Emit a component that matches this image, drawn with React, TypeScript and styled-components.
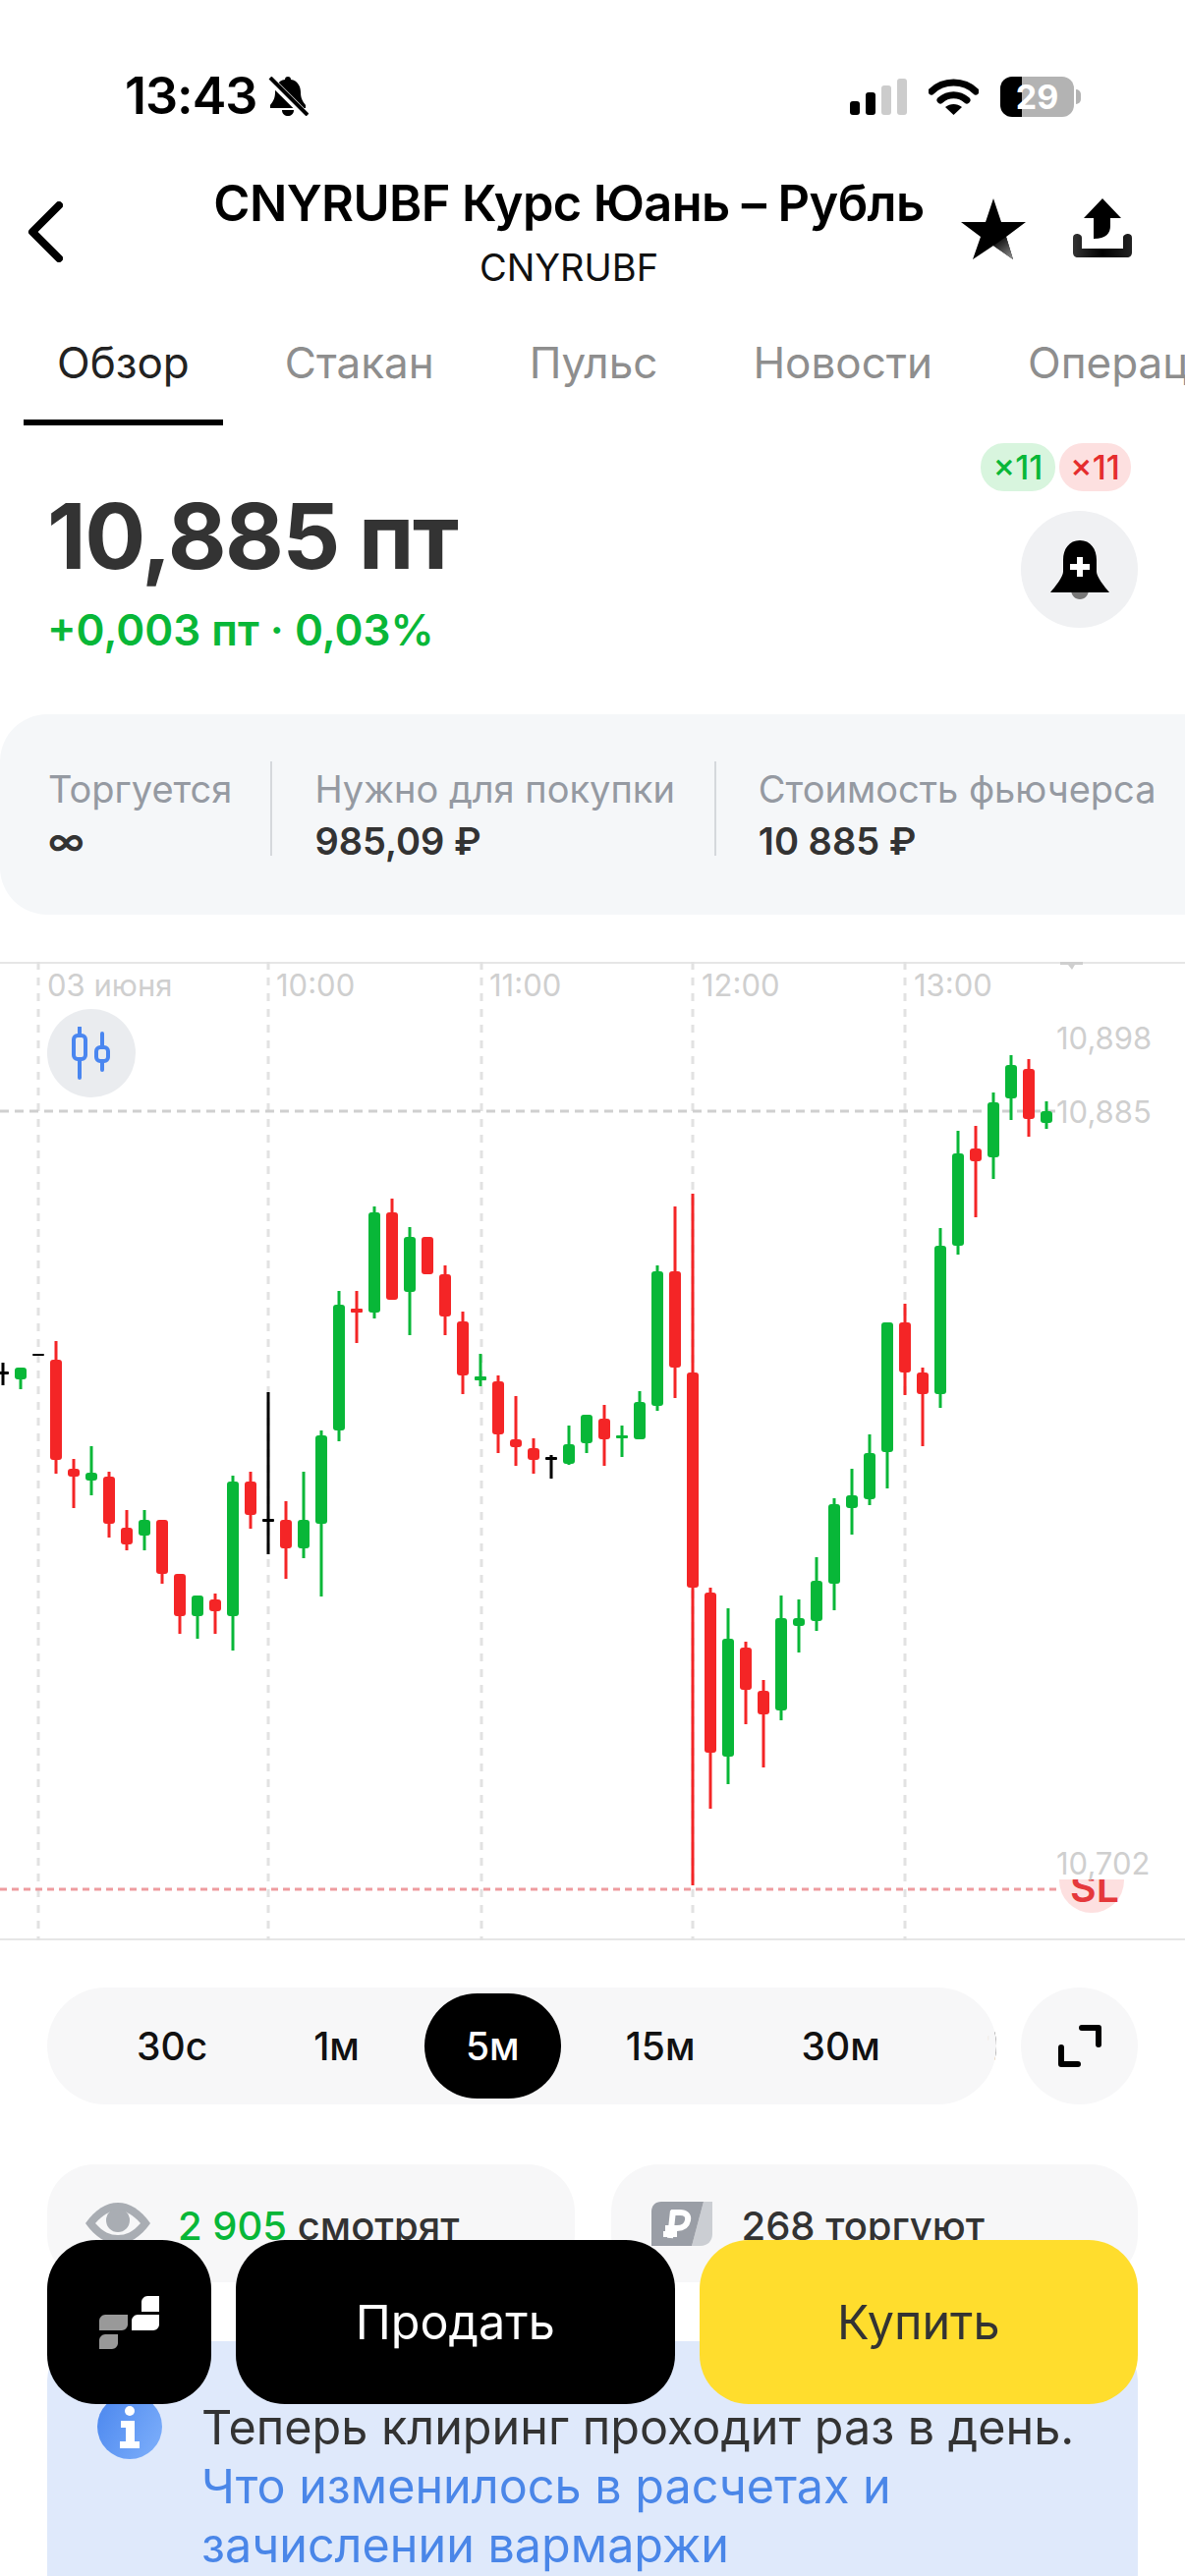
import React from "react";
import styled, { createGlobalStyle } from "styled-components";

const GREEN = "#08b738";
const RED = "#f42526";
const BLACK = "#000";

type Candle = [number, number, number, number, "g" | "r" | "k"];

// wick top, wick bottom, body top, body bottom - first candle sits at x=3, step 18
const candles: Candle[] = [
  [1387, 1410, 1396, 1399, "k"],
  [1392, 1414, 1392, 1404, "g"],
  [1378, 1380, 1378, 1380, "k"],
  [1365, 1500, 1384, 1486, "r"],
  [1485, 1535, 1495, 1503, "r"],
  [1472, 1522, 1499, 1507, "g"],
  [1498, 1565, 1503, 1551, "r"],
  [1537, 1578, 1555, 1572, "r"],
  [1537, 1578, 1547, 1563, "g"],
  [1547, 1612, 1547, 1602, "r"],
  [1602, 1663, 1602, 1645, "r"],
  [1624, 1668, 1624, 1645, "g"],
  [1622, 1663, 1628, 1640, "r"],
  [1502, 1680, 1508, 1645, "g"],
  [1498, 1556, 1508, 1542, "r"],
  [1417, 1582, 1546, 1549, "k"],
  [1528, 1607, 1547, 1576, "r"],
  [1498, 1586, 1547, 1576, "g"],
  [1456, 1625, 1461, 1551, "g"],
  [1314, 1467, 1328, 1456, "g"],
  [1314, 1367, 1332, 1336, "r"],
  [1228, 1342, 1234, 1336, "g"],
  [1220, 1323, 1234, 1323, "r"],
  [1249, 1359, 1259, 1315, "g"],
  [1259, 1297, 1259, 1297, "r"],
  [1288, 1359, 1297, 1340, "r"],
  [1335, 1419, 1345, 1400, "r"],
  [1378, 1411, 1401, 1405, "g"],
  [1400, 1479, 1406, 1460, "r"],
  [1421, 1492, 1465, 1473, "r"],
  [1464, 1500, 1474, 1486, "r"],
  [1481, 1505, 1483, 1486, "k"],
  [1451, 1491, 1470, 1490, "g"],
  [1440, 1479, 1440, 1469, "g"],
  [1430, 1492, 1444, 1465, "r"],
  [1451, 1483, 1461, 1464, "g"],
  [1416, 1465, 1427, 1465, "g"],
  [1288, 1436, 1294, 1431, "g"],
  [1228, 1423, 1294, 1392, "r"],
  [1215, 1919, 1397, 1616, "r"],
  [1616, 1841, 1621, 1784, "r"],
  [1637, 1816, 1668, 1788, "g"],
  [1671, 1755, 1677, 1720, "r"],
  [1710, 1799, 1721, 1745, "r"],
  [1624, 1751, 1647, 1741, "g"],
  [1628, 1682, 1647, 1655, "g"],
  [1585, 1660, 1609, 1650, "g"],
  [1525, 1639, 1531, 1612, "g"],
  [1495, 1562, 1522, 1535, "g"],
  [1460, 1532, 1479, 1526, "g"],
  [1346, 1515, 1346, 1478, "g"],
  [1327, 1420, 1346, 1397, "r"],
  [1392, 1472, 1397, 1419, "r"],
  [1250, 1433, 1268, 1419, "g"],
  [1151, 1277, 1174, 1268, "g"],
  [1146, 1239, 1169, 1182, "r"],
  [1112, 1200, 1122, 1178, "g"],
  [1074, 1140, 1084, 1118, "g"],
  [1078, 1157, 1088, 1139, "r"],
  [1121, 1149, 1131, 1143, "g"],
];

const toneColor = { g: GREEN, r: RED, k: BLACK };

const timeLabels = [
  { x: 48, text: "03 июня" },
  { x: 281, text: "10:00" },
  { x: 498, text: "11:00" },
  { x: 714, text: "12:00" },
  { x: 930, text: "13:00" },
];

const tabs = ["Обзор", "Стакан", "Пульс", "Новости", "Операции"];
const frames = ["30с", "1м", "5м", "15м", "30м", "1ч"];

const GlobalStyle = createGlobalStyle`
  html, body {
    margin: 0;
    padding: 0;
    background: #fff;
  }
  body {
    font-family: Inter, "Noto Sans", sans-serif;
    color: #333;
  }
  * {
    box-sizing: border-box;
  }
`;

const Page = styled.div`
  position: relative;
  width: 1206px;
  height: 2622px;
  overflow: hidden;
  background: #fff;
`;

const StatusBar = styled.div`
  height: 150px;
  padding: 78px 113px 0 127px;
  display: flex;
  justify-content: space-between;
  align-items: flex-start;
`;

const StatusGroup = styled.div<{ $gap: number }>`
  display: flex;
  align-items: center;
  height: 40px;
  gap: ${(p) => p.$gap}px;
`;

const Time = styled.span`
  font-size: 52px;
  font-weight: 600;
  line-height: 40px;
  letter-spacing: -1px;
  color: #000;
`;

const Battery = styled.div`
  position: relative;
  width: 75px;
  height: 41px;
  border-radius: 12px;
  background: linear-gradient(90deg, #000 0 22px, #b3b3b3 22px);
  color: #fff;
  font-size: 34px;
  font-weight: 700;
  line-height: 41px;
  text-align: center;
  &::after {
    content: "";
    position: absolute;
    right: -7px;
    top: 13px;
    width: 5px;
    height: 15px;
    border-radius: 0 8px 8px 0;
    background: #b3b3b3;
  }
`;

const Header = styled.header`
  height: 160px;
  display: grid;
  grid-template-columns: 217px 724px 1fr;
`;

const BackCell = styled.div`
  padding: 55px 0 0 28px;
`;

const TitleCell = styled.div`
  padding-top: 27px;
  display: flex;
  flex-direction: column;
  align-items: center;
`;

const Title = styled.h1`
  margin: 0;
  font-size: 50.500px;
  line-height: 60px;
  font-weight: 600;
  letter-spacing: -0.6px;
  white-space: nowrap;
  color: #000;
`;

const Ticker = styled.div`
  margin-top: 15px;
  font-size: 38px;
  line-height: 40px;
  color: #111;
`;

const ActionCell = styled.div`
  padding: 52px 0 0 37px;
  display: flex;
  gap: 48px;
  align-items: flex-start;
`;

const TabBar = styled.nav`
  height: 123px;
  padding-left: 24px;
  display: flex;
  gap: 29px;
  overflow: hidden;
`;

const Tab = styled.div<{ $active?: boolean }>`
  flex-shrink: 0;
  display: flex;
  align-items: center;
  padding: 0 34px;
  font-size: 44px;
  color: ${(p) => (p.$active ? "#222" : "#8e8e8e")};
  border-bottom: 6px solid ${(p) => (p.$active ? "#000" : "transparent")};
`;

const Quote = styled.section`
  height: 294px;
  padding: 0 48px 0 48px;
  display: flex;
  justify-content: space-between;
`;

const PriceColumn = styled.div`
  padding-top: 63px;
`;

const Price = styled.div`
  font-size: 92px;
  line-height: 100px;
  font-weight: 700;
  letter-spacing: -1.5px;
  color: #333;
`;

const Change = styled.div`
  margin-top: 20px;
  font-size: 44px;
  line-height: 50px;
  font-weight: 600;
  color: ${GREEN};
`;

const QuoteSide = styled.div`
  padding-top: 18px;
  display: flex;
  flex-direction: column;
  align-items: flex-end;
`;

const Leverage = styled.div`
  display: flex;
  gap: 4px;
  margin-right: 7px;
`;

const LeverageBadge = styled.span<{ $sell?: boolean }>`
  width: ${(p) => (p.$sell ? 73 : 76)}px;
  height: 49px;
  border-radius: 24px;
  display: flex;
  align-items: center;
  justify-content: center;
  font-size: 34px;
  font-weight: 500;
  color: ${(p) => (p.$sell ? "#e52d2d" : GREEN)};
  background: ${(p) => (p.$sell ? "#fde0e0" : "#d8f5de")};
`;

const RoundButton = styled.button<{ $top?: number }>`
  width: 119px;
  height: 119px;
  margin-top: ${(p) => p.$top ?? 0}px;
  padding: 0;
  border: 0;
  border-radius: 50%;
  flex-shrink: 0;
  display: flex;
  align-items: center;
  justify-content: center;
  background: ${(p) => (p.$top ? "#f0f1f3" : "#f7f7f8")};
`;

const StatsCard = styled.section`
  height: 204px;
  padding: 48px 0 0 49px;
  display: flex;
  background: #f5f7f9;
  border-radius: 48px 0 0 48px;
`;

const Stat = styled.div<{ $first?: boolean; $pad: number }>`
  height: 96px;
  flex-shrink: 0;
  white-space: nowrap;
  padding-left: ${(p) => (p.$first ? 0 : 43)}px;
  padding-right: ${(p) => p.$pad}px;
  border-left: ${(p) => (p.$first ? "none" : "2px solid #d5d8dc")};
`;

const StatLabel = styled.div`
  font-size: 38px;
  line-height: 44px;
  margin-top: 6px;
  color: #959aa2;
`;

const StatValue = styled.div`
  font-size: 38px;
  line-height: 44px;
  margin-top: 9px;
  font-weight: 600;
  color: #333;
`;

const Chart = styled.section`
  position: relative;
  height: 996px;
  margin-top: 48px;
  border-top: 2px solid #e6e6e6;
  border-bottom: 2px solid #e6e6e6;
`;

const ChartCanvas = styled.svg`
  display: block;
  position: absolute;
  left: 0;
  top: -2px;
  width: 1206px;
  height: 996px;
`;

const ChartText = styled.text`
  font-family: Inter, sans-serif;
  font-size: 31px;
  fill: #cfcfcf;
`;

const SlText = styled.text`
  font-family: Inter, sans-serif;
  font-size: 41px;
  font-weight: 600;
  fill: #e5383b;
`;

const CandleToggle = styled.button`
  position: absolute;
  left: 48px;
  top: 46px;
  width: 90px;
  height: 90px;
  padding: 0;
  border: 0;
  border-radius: 50%;
  display: flex;
  align-items: center;
  justify-content: center;
  background: #eaecef;
`;

const FrameRow = styled.div`
  margin-top: 48px;
  padding: 0 48px;
  display: flex;
  gap: 25px;
`;

const FramePill = styled.div`
  position: relative;
  width: 966px;
  height: 119px;
  padding: 0 0 0 49px;
  display: flex;
  align-items: center;
  gap: 24px;
  overflow: hidden;
  border-radius: 60px;
  background: #f7f7f8;
  &::after {
    content: "";
    position: absolute;
    right: 0;
    top: 0;
    bottom: 0;
    width: 12px;
    background: linear-gradient(90deg, rgba(247, 247, 248, 0.7), #f7f7f8 40%);
  }
`;

const Frame = styled.div<{ $active?: boolean }>`
  height: 107px;
  padding: 0 42px;
  flex-shrink: 0;
  display: flex;
  align-items: center;
  font-size: 39px;
  font-weight: 500;
  border-radius: 54px;
  color: ${(p) => (p.$active ? "#fff" : "#111")};
  background: ${(p) => (p.$active ? "#000" : "transparent")};
`;

const CrowdRow = styled.div`
  margin-top: 61px;
  padding: 0 48px;
  display: grid;
  grid-template-columns: 1fr 1fr;
  gap: 37px;
`;

const CrowdCard = styled.div<{ $gap: number; $pad: number }>`
  height: 120px;
  padding-left: ${(p) => p.$pad}px;
  display: flex;
  align-items: center;
  gap: ${(p) => p.$gap}px;
  border-radius: 48px;
  background: #f7f7f8;
`;

const CrowdText = styled.span`
  font-size: 40px;
  font-weight: 500;
  margin-top: 4px;
  color: #333;
`;

const CrowdCount = styled.span`
  color: ${GREEN};
`;

const Banner = styled.section`
  height: 300px;
  margin: 60px 48px 0;
  padding: 58px 20px 0 51px;
  display: flex;
  gap: 40px;
  border-radius: 40px;
  background: #dfe9fb;
`;

const BannerIcon = styled.div`
  width: 66px;
  height: 66px;
  margin-top: -4px;
  flex-shrink: 0;
  border-radius: 50%;
  display: flex;
  align-items: center;
  justify-content: center;
  background: linear-gradient(120deg, #4a86ee, #7fb0fb);
`;

const BannerText = styled.div`
  font-size: 48.500px;
  line-height: 60px;
  white-space: nowrap;
  color: #333;
`;

const BannerLink = styled.span`
  color: #4a86e8;
`;

const ActionBar = styled.div`
  position: absolute;
  left: 48px;
  right: 48px;
  bottom: 175px;
  display: flex;
  gap: 25px;
`;

const ActionButton = styled.button<{ $tone: "dark" | "yellow"; $width?: number }>`
  flex: ${(p) => (p.$width ? `0 0 ${p.$width}px` : "1")};
  height: 167px;
  padding: 0;
  border: 0;
  border-radius: 50px;
  display: flex;
  align-items: center;
  justify-content: center;
  font-family: Inter, sans-serif;
  font-size: 48.500px;
  color: ${(p) => (p.$tone === "dark" ? "#fff" : "#333")};
  background: ${(p) => (p.$tone === "dark" ? "#000" : "#ffdd2d")};
`;

function BellSlash() {
  return (
    <svg width="42" height="40" viewBox="0 0 42 40">
      <path d="M21 0c2 0 3 1 3 3 7 1 10 7 10 13 0 6 2 9 5 13v3H3v-3c3-4 5-7 5-13 0-6 3-12 10-13 0-2 1-3 3-3z" fill="#000" />
      <path d="M15 34h12c0 4-3 6-6 6s-6-2-6-6z" fill="#000" />
      <path d="M1 1l38 38" stroke="#fff" strokeWidth="8" />
      <path d="M3 1l38 38" stroke="#000" strokeWidth="4" />
    </svg>
  );
}

function Signal() {
  return (
    <svg width="58" height="37" viewBox="0 0 58 37">
      <rect x="0" y="23" width="10" height="14" rx="3" fill="#000" />
      <rect x="16" y="14" width="10" height="23" rx="3" fill="#000" />
      <rect x="32" y="7" width="10" height="30" rx="3" fill="#ccc" />
      <rect x="48" y="0" width="10" height="37" rx="3" fill="#ccc" />
    </svg>
  );
}

function Wifi() {
  return (
    <svg width="51" height="37" viewBox="0 0 51 37">
      <path d="M3 13C15 1 36 1 48 13" fill="none" stroke="#000" strokeWidth="7" strokeLinecap="round" />
      <path d="M12 22c8-7 19-7 27 0" fill="none" stroke="#000" strokeWidth="7" strokeLinecap="round" />
      <path d="M25.500 37L17 29c5-4 12-4 17 0z" fill="#000" />
    </svg>
  );
}

function BackIcon() {
  return (
    <svg width="36" height="62" viewBox="0 0 36 62">
      <path d="M32 4L5 31l27 27" fill="none" stroke="#000" strokeWidth="8" strokeLinecap="round" strokeLinejoin="round" />
    </svg>
  );
}

function StarIcon() {
  return (
    <svg width="66" height="62" viewBox="0 0 66 62">
      <defs>
        <linearGradient id="starShade" x1="0.2" y1="0" x2="0.8" y2="1">
          <stop offset="0" stopColor="#000" />
          <stop offset="1" stopColor="#888" />
        </linearGradient>
      </defs>
      <path d="M33 0l8 24h25L46 39l7 23-20-14-21 14 8-23L0 24h25z" fill="#000" />
      <path d="M46 39l7 23-20-14z" fill="url(#starShade)" />
    </svg>
  );
}

function ShareIcon() {
  return (
    <svg width="60" height="60" viewBox="0 0 60 60">
      <defs>
        <linearGradient id="trayShade" x1="0" y1="0" x2="1" y2="0">
          <stop offset="0" stopColor="#333" />
          <stop offset="0.5" stopColor="#000" />
          <stop offset="1" stopColor="#222" />
        </linearGradient>
      </defs>
      <path d="M30 0l19 20H38v8c0 7-4 13-17 13V20H11z" fill="#000" />
      <path d="M0 40c0-3 2-4 4-4s5 1 5 4v11h42V40c0-3 3-4 5-4s4 1 4 4v15c0 3-2 5-5 5H5c-3 0-5-2-5-5z" fill="url(#trayShade)" />
    </svg>
  );
}

function BellPlus() {
  return (
    <svg width="60" height="60" viewBox="0 0 60 60">
      <path d="M21 50h18c0 6-4 10-9 10s-9-4-9-10z" fill="#777" />
      <path d="M30 0c11 0 17 9 17 20v12c0 5 8 15 13 21H0c5-6 13-16 13-21V20C13 9 19 0 30 0z" fill="#000" />
      <path d="M27 17h6v7h7v6h-7v7h-6v-7h-7v-6h7z" fill="#fff" />
    </svg>
  );
}

function CandleIcon() {
  return (
    <svg width="40" height="54" viewBox="0 0 40 54" fill="none" stroke="#4a86f0" strokeWidth="4" strokeLinecap="round">
      <path d="M8 1v8M8 35v17M31 7v13M31 37v7" />
      <rect x="2" y="9" width="12" height="24" rx="4" />
      <rect x="25" y="21" width="12" height="14" rx="4" />
    </svg>
  );
}

function ExpandIcon() {
  return (
    <svg width="44" height="43" viewBox="0 0 44 43" fill="none" stroke="#000" strokeWidth="6" strokeLinecap="round" strokeLinejoin="round">
      <path d="M24 3h17v17" />
      <path d="M3 23v17h17" />
    </svg>
  );
}

function EyeIcon() {
  return (
    <svg width="66" height="42" viewBox="0 0 66 42">
      <path d="M0 21C10 7 21 0 33 0s23 7 33 21c-10 14-21 21-33 21S10 35 0 21z" fill="#a9adb3" />
      <path d="M10 21c8-9 15-13 23-13s15 4 23 13c-8 9-15 12-23 12s-15-3-23-12z" fill="#f7f7f8" />
      <circle cx="33" cy="18" r="12" fill="#a9adb3" />
    </svg>
  );
}

function RubleIcon() {
  return (
    <svg width="62" height="45" viewBox="0 0 62 45">
      <path d="M53 0h9v33c0 7-5 12-12 12h-9z" fill="#cbced3" />
      <path d="M10 0h43L41 45H0V10C0 4 4 0 10 0z" fill="#9a9ea6" />
      <path d="M22 9l-3 28M20 11h9c6 0 9 3 8 8s-5 8-11 8h-12M12 33h14" fill="none" stroke="#fff" strokeWidth="6" />
    </svg>
  );
}

function LogoMark() {
  return (
    <svg width="61" height="54" viewBox="0 0 61 54">
      <path d="M49 0h12v16H43V6c0-3 3-6 6-6z" fill="#fff" />
      <path d="M39 19h22v10c0 3-3 6-6 6H33V25c0-3 3-6 6-6z" fill="#fff" />
      <path d="M6 19h23v10c0 3-3 6-6 6H0V25c0-3 3-6 6-6z" fill="#999" />
      <path d="M6 39h13v9c0 3-3 6-6 6H0v-9c0-3 3-6 6-6z" fill="#999" />
    </svg>
  );
}

function InfoIcon() {
  return (
    <svg width="22" height="44" viewBox="0 0 22 44">
      <circle cx="11" cy="6" r="5" fill="#fff" />
      <path d="M2 16h14v21h5v7H1v-7h6V23H2z" fill="#fff" />
    </svg>
  );
}

function CandleChart() {
  return (
    <ChartCanvas viewBox="0 979 1206 996">
      {[39, 273, 490, 705, 921].map((x) => (
        <line key={x} x1={x} x2={x} y1={979} y2={1975} stroke="#e2e2e2" strokeWidth="3" strokeDasharray="8 8" />
      ))}
      <line x1="0" x2="1075" y1="1131" y2="1131" stroke="#cfcfcf" strokeWidth="3" strokeDasharray="9 6" />
      <line x1="0" x2="1078" y1="1923" y2="1923" stroke="#ee9c9f" strokeWidth="3" strokeDasharray="7 5" />
      <path d="M1079 979h23v3h-8l-3 5-4-5h-8z" fill="#cfcfcf" />
      {timeLabels.map((l) => (
        <ChartText key={l.text} x={l.x} y={1014}>
          {l.text}
        </ChartText>
      ))}
      <ChartText x="1075" y="1068">10,898</ChartText>
      <ChartText x="1075" y="1143">10,885</ChartText>
      <circle cx="1111" cy="1914" r="33" fill="#fde0e0" />
      <SlText x="1089" y="1936">SL</SlText>
      <rect x="1075" y="1880" width="110" height="33" fill="#fff" />
      <ChartText x="1075" y="1908">10,702</ChartText>
      {candles.map(([wt, wb, bt, bb, tone], i) => {
        const x = 3 + i * 18;
        const color = toneColor[tone];
        return (
          <g key={i} fill={color}>
            <rect x={x - 1.5} y={wt} width="3" height={wb - wt} />
            <rect x={x - 6} y={bt} width="12" height={bb - bt} rx={bb - bt > 6 ? 3 : 1} />
          </g>
        );
      })}
    </ChartCanvas>
  );
}

export default function App() {
  return (
    <Page>
      <GlobalStyle />
      <StatusBar>
        <StatusGroup $gap={11}>
          <Time>13:43</Time>
          <BellSlash />
        </StatusGroup>
        <StatusGroup $gap={22}>
          <Signal />
          <Wifi />
          <Battery>29</Battery>
        </StatusGroup>
      </StatusBar>

      <Header>
        <BackCell>
          <BackIcon />
        </BackCell>
        <TitleCell>
          <Title>CNYRUBF Курс Юань – Рубль</Title>
          <Ticker>CNYRUBF</Ticker>
        </TitleCell>
        <ActionCell>
          <StarIcon />
          <ShareIcon />
        </ActionCell>
      </Header>

      <TabBar>
        {tabs.map((t, i) => (
          <Tab key={t} $active={i === 0}>
            {t}
          </Tab>
        ))}
      </TabBar>

      <Quote>
        <PriceColumn>
          <Price>10,885 пт</Price>
          <Change>+0,003 пт · 0,03%</Change>
        </PriceColumn>
        <QuoteSide>
          <Leverage>
            <LeverageBadge>×11</LeverageBadge>
            <LeverageBadge $sell>×11</LeverageBadge>
          </Leverage>
          <RoundButton $top={20}>
            <BellPlus />
          </RoundButton>
        </QuoteSide>
      </Quote>

      <StatsCard>
        <Stat $first $pad={39}>
          <StatLabel>Торгуется</StatLabel>
          <StatValue>∞</StatValue>
        </Stat>
        <Stat $pad={40}>
          <StatLabel>Нужно для покупки</StatLabel>
          <StatValue>985,09 ₽</StatValue>
        </Stat>
        <Stat $pad={0}>
          <StatLabel>Стоимость фьючерса</StatLabel>
          <StatValue>10 885 ₽</StatValue>
        </Stat>
      </StatsCard>

      <Chart>
        <CandleChart />
        <CandleToggle>
          <CandleIcon />
        </CandleToggle>
      </Chart>

      <FrameRow>
        <FramePill>
          {frames.map((f) => (
            <Frame key={f} $active={f === "5м"}>
              {f}
            </Frame>
          ))}
        </FramePill>
        <RoundButton>
          <ExpandIcon />
        </RoundButton>
      </FrameRow>

      <CrowdRow>
        <CrowdCard $gap={28} $pad={39}>
          <EyeIcon />
          <CrowdText>
            <CrowdCount>2 905</CrowdCount> смотрят
          </CrowdText>
        </CrowdCard>
        <CrowdCard $gap={30} $pad={41}>
          <RubleIcon />
          <CrowdText>268 торгуют</CrowdText>
        </CrowdCard>
      </CrowdRow>

      <Banner>
        <BannerIcon>
          <InfoIcon />
        </BannerIcon>
        <BannerText>
          Теперь клиринг проходит раз в день.
          <br />
          <BannerLink>
            Что изменилось в расчетах и
            <br />
            зачислении вармаржи
          </BannerLink>
        </BannerText>
      </Banner>

      <ActionBar>
        <ActionButton $tone="dark" $width={167}>
          <LogoMark />
        </ActionButton>
        <ActionButton $tone="dark">Продать</ActionButton>
        <ActionButton $tone="yellow">Купить</ActionButton>
      </ActionBar>
    </Page>
  );
}
